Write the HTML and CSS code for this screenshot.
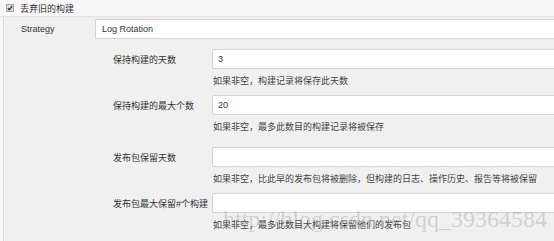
FILE: index.html
```html
<!DOCTYPE html>
<html>

<head>
    <title>丢弃旧的构建</title>
    <link rel="stylesheet" href="styles.css">
</head>

<body>
    <div class="page">
        <div class="opt-head">
            <span class="cb">
                <svg width="8" height="8" viewBox="0 0 8 8">
                    <rect x="0.5" y="0.5" width="7" height="7" fill="#d8d8d8" stroke="#a8a8a8"/>
                    <path d="M1.8 4.2 L3.3 5.7 L6.2 2.2" fill="none" stroke="#333" stroke-width="1.3"/>
                </svg>
            </span>
            <span class="opt-title">丢弃旧的构建</span>
        </div>

        <div class="opt-body">
            <div class="row">
                <div class="row-label">Strategy</div>
                <div class="select">Log Rotation</div>
            </div>

            <div class="sub">
                <div class="sub-row">
                    <div class="sub-label">保持构建的天数</div>
                    <div class="input">3</div>
                </div>
                <div class="help">如果非空，构建记录将保存此天数</div>

                <div class="sub-row">
                    <div class="sub-label">保持构建的最大个数</div>
                    <div class="input">20</div>
                </div>
                <div class="help help-wide">如果非空，最多此数目的构建记录将被保存</div>

                <div class="sub-row">
                    <div class="sub-label">发布包保留天数</div>
                    <div class="input"></div>
                </div>
                <div class="help">如果非空，比此早的发布包将被删除，但构建的日志、操作历史、报告等将被保留</div>

                <div class="sub-row">
                    <div class="sub-label">发布包最大保留#个构建</div>
                    <div class="input"></div>
                </div>
                <div class="help">如果非空，最多此数目大构建将保留他们的发布包</div>
            </div>
        </div>

        <div class="watermark">http://blog.csdn.net/qq_39364584</div>
    </div>
</body>

</html>
```

FILE: styles.css
```css
body {
    margin: 0;
    background-color: #f7f7f7;
    font-family: "Liberation Sans", "Noto Sans CJK SC", sans-serif;
    font-size: 9px;
    color: #333;
    overflow: hidden;
}

.page {
    position: relative;
    height: 241px;
}

.opt-head {
    height: 16px;
    display: flex;
    align-items: center;
    border-bottom: 1px solid #e4e4e4;
}

.cb {
    display: flex;
    margin-left: 6px;
    margin-top: -1px;
}

.opt-title {
    margin-left: 6px;
}

.opt-body {
    margin-left: 3px;
    border-left: 1px solid #dcdcdc;
    background-color: #f0f0f0;
    padding-left: 17px;
    padding-top: 2px;
    height: 230px;
}

.row {
    display: flex;
    align-items: center;
}

.row-label {
    width: 74px;
}

.select {
    flex: 1;
    height: 18px;
    line-height: 18px;
    background-color: #fff;
    border-top: 1px solid #d4d4d4;
    border-bottom: 1px solid #d4d4d4;
    border-left: 1px solid #d4d4d4;
    padding-left: 6px;
    margin-right: -10px;
    font-size: 9px;
}

.sub {
    padding-left: 92px;
    padding-top: 10px;
}

.sub-row {
    display: flex;
    align-items: center;
}

.sub-label {
    width: 99px;
}

.input {
    flex: 1;
    height: 18px;
    line-height: 18px;
    background-color: #fff;
    border: 1px solid #d4d4d4;
    border-radius: 2px;
    padding-left: 5px;
    margin-right: -10px;
}

.help {
    margin-left: 100px;
    margin-top: 6px;
    margin-bottom: 8px;
    line-height: 12px;
    color: #444;
}

.help-wide {
    margin-bottom: 14px;
}

.watermark {
    position: absolute;
    left: 223px;
    top: 207px;
    font-family: "Liberation Serif", serif;
    font-size: 24px;
    line-height: 24px;
    color: rgba(140, 140, 140, 0.32);
    white-space: nowrap;
}
```
